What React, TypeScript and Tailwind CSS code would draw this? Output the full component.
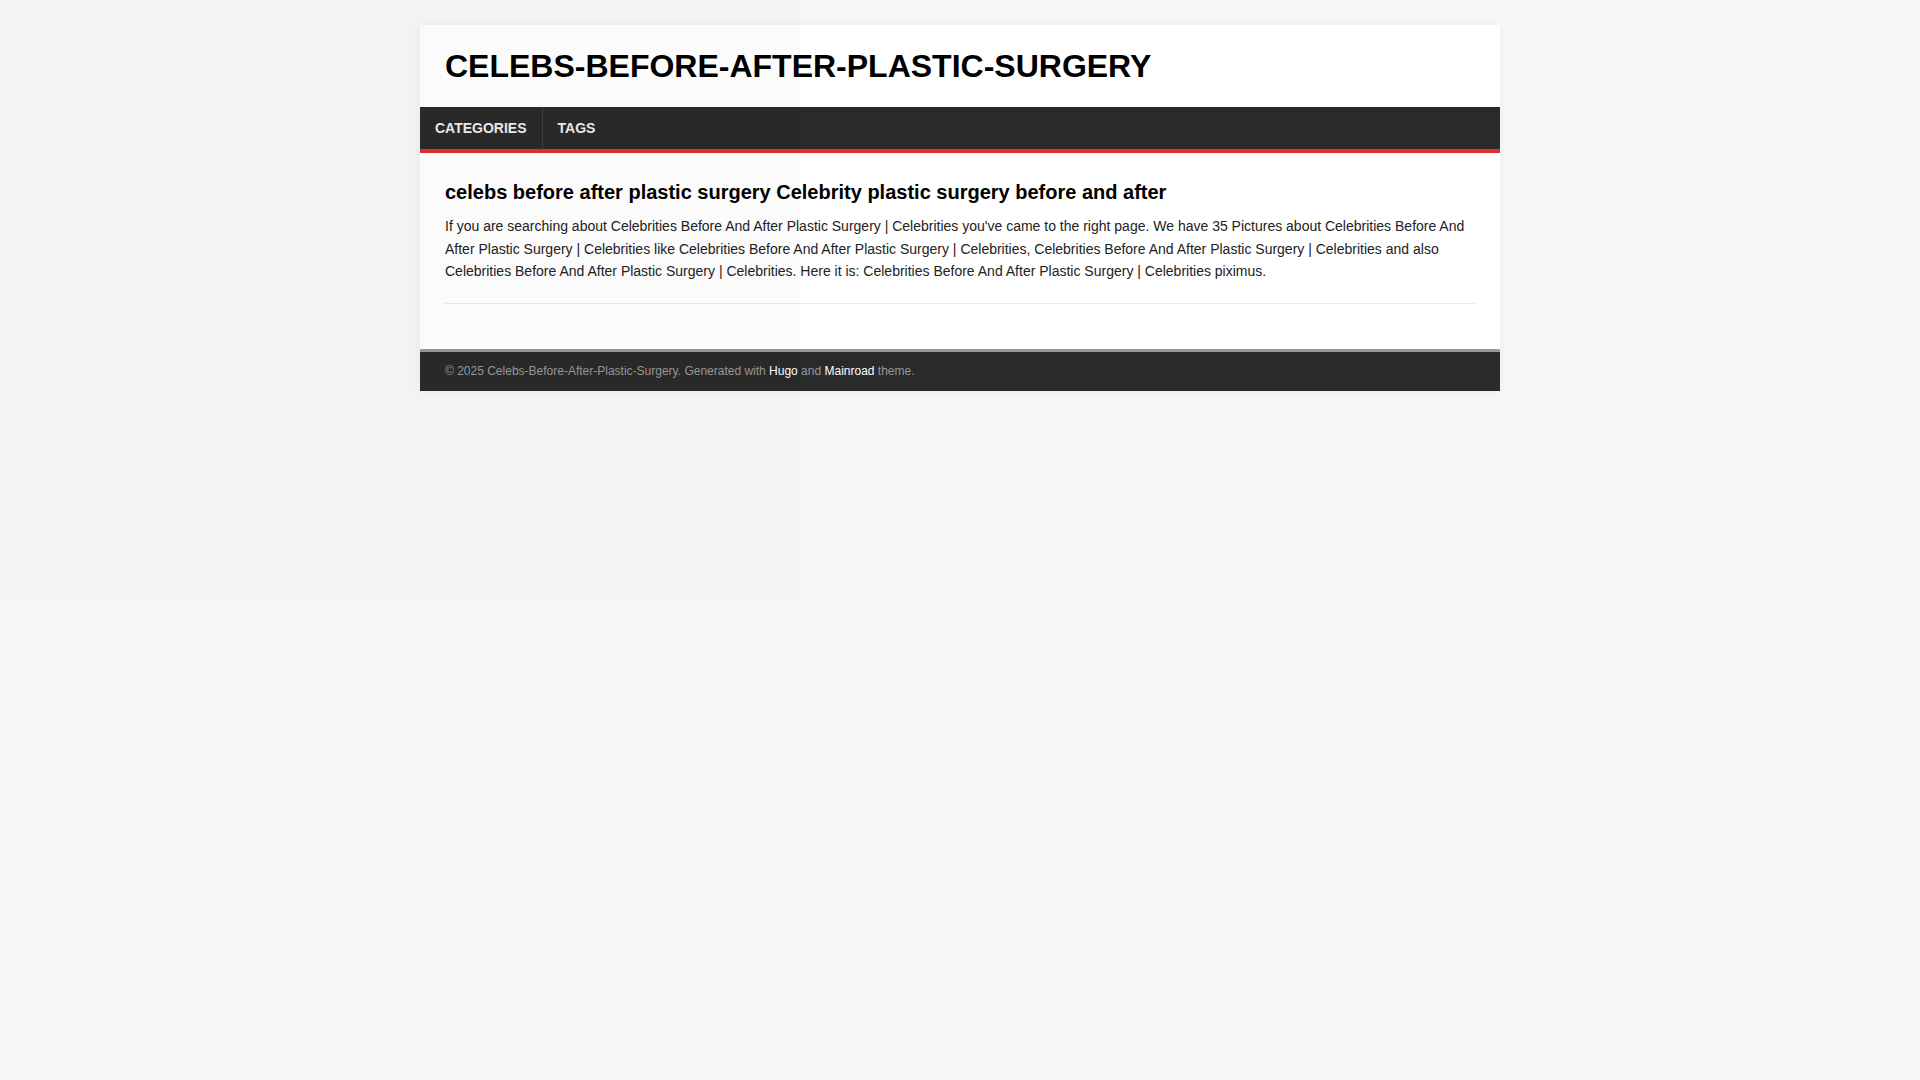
export default function App() {
  return (
    <div className="min-h-[1080px] bg-[#f7f7f7] pt-[25px] font-['Liberation_Sans',Arial,sans-serif] text-[#000]">
      <div className="mx-auto w-[1080px] bg-white shadow-[0_0_10px_rgba(0,0,0,0.05)]">
        {/* Header */}
        <header>
          <div className="flex h-[82px] items-center px-[25px]">
            <a className="text-[32px] leading-none font-bold uppercase text-black">Celebs-Before-After-Plastic-Surgery</a>
          </div>
          <nav className="flex h-[46px] border-b-[4px] border-[#e22d30] bg-[#2a2a2a]">
            <a className="flex items-center border-r border-[#3d3d3d] px-[15px] text-[14px] font-bold uppercase text-[#ececec]">Categories</a>
            <a className="flex items-center px-[15px] text-[14px] font-bold uppercase text-[#ececec]">Tags</a>
          </nav>
        </header>

        {/* Main */}
        <main className="px-[25px] pt-[26px] pb-[45px]">
          <article className="border-b border-[#ebebeb] pb-[20px]">
            <h1 className="mb-[10px] text-[20px] leading-[26px] font-bold">
              celebs before after plastic surgery Celebrity plastic surgery before and after
            </h1>
            <p className="text-[14px] leading-[22.6px] text-[#222]">
              If you are searching about Celebrities Before And After Plastic Surgery | Celebrities you've came to the right page. We have 35 Pictures about Celebrities Before And After Plastic Surgery | Celebrities like Celebrities Before And After Plastic Surgery | Celebrities, Celebrities Before And After Plastic Surgery | Celebrities and also Celebrities Before And After Plastic Surgery | Celebrities. Here it is: Celebrities Before And After Plastic Surgery | Celebrities piximus.
            </p>
          </article>
        </main>

        {/* Footer */}
        <footer className="border-t-[3px] border-[#999] bg-[#2a2a2a] px-[25px] py-[10px] text-[12px] leading-[19px] text-[#999]">
          © 2025 Celebs-Before-After-Plastic-Surgery. Generated with <a className="text-white">Hugo</a> and{" "}
          <a className="text-white">Mainroad</a> theme.
        </footer>
      </div>

      {/* faint overlay seen in the capture */}
      <div className="pointer-events-none absolute top-0 left-0 h-[600px] w-[800px] bg-black/[0.016]" />
    </div>
  )
}
